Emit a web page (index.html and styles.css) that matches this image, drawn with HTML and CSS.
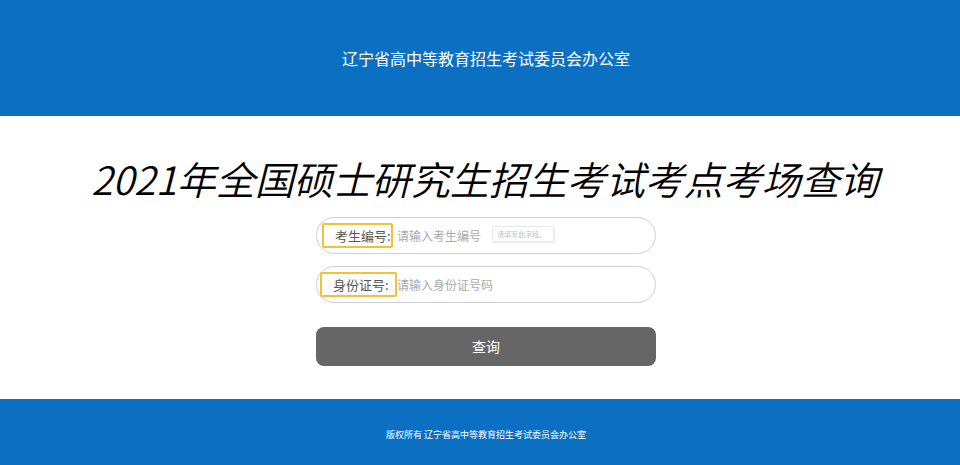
FILE: index.html
```html
<!DOCTYPE html>
<html lang="zh-CN">
<head>
<meta charset="utf-8">
<title>考点考场查询</title>
<link rel="stylesheet" href="styles.css">
</head>
<body>
<header class="top">
  <div class="top-title">辽宁省高中等教育招生考试委员会办公室</div>
</header>
<main class="main">
  <h1 class="title">2021年全国硕士研究生招生考试考点考场查询</h1>
  <form class="form">
    <div class="field">
      <span class="label">考生编号:</span>
      <span class="placeholder">请输入考生编号</span>
      <span class="tip">请填写此字段。</span>
    </div>
    <div class="field">
      <span class="label label-wide">身份证号:</span>
      <span class="placeholder placeholder-tight">请输入身份证号码</span>
    </div>
    <div class="btn">查询</div>
  </form>
</main>
<footer class="bottom">
  <div class="bottom-text">版权所有 辽宁省高中等教育招生考试委员会办公室</div>
</footer>
</body>
</html>
```

FILE: styles.css
```css
* { box-sizing: border-box; }
html, body { margin: 0; padding: 0; }
body {
  width: 960px;
  height: 465px;
  overflow: hidden;
  font-family: "Noto Sans CJK SC", "Noto Sans", sans-serif;
  background: #fff;
}
.top {
  height: 116px;
  background: #0b6fc2;
  display: flex;
  align-items: center;
  justify-content: center;
}
.top-title {
  color: #fff;
  font-size: 16px;
  line-height: 20px;
  padding-left: 12px;
}
.main {
  height: 283px;
  display: flex;
  flex-direction: column;
  align-items: center;
}
.title {
  margin: 38px 0 0 0;
  font-size: 39px;
  line-height: 48px;
  font-weight: 350;
  font-style: italic;
  color: #000;
  white-space: nowrap;
  padding-left: 10px;
}
.form {
  margin-top: 15px;
  width: 340px;
  display: flex;
  flex-direction: column;
  margin-left: 12px;
}
.field {
  position: relative;
  height: 37px;
  border: 1px solid #cfcfcf;
  border-radius: 19px;
  display: flex;
  align-items: center;
  padding-left: 5px;
  margin-bottom: 12px;
}
.label {
  width: 71px;
  height: 25px;
  border: 2px solid #f3c234;
  border-radius: 2px;
  font-size: 13px;
  line-height: 21px;
  color: #555;
  padding-left: 11px;
  white-space: nowrap;
}
.label-wide { width: 77px; margin-left: -2px; }
.placeholder {
  margin-left: 4px;
  font-size: 12px;
  color: #a9a9a9;
  white-space: nowrap;
}
.placeholder-tight { margin-left: 0; }
.tip {
  position: absolute;
  left: 175px;
  top: 8px;
  width: 62px;
  height: 16px;
  border: 1px solid #e6e9ef;
  box-shadow: 1px 1px 2px rgba(0,0,0,0.08);
  font-size: 7px;
  line-height: 14px;
  color: #b8c0cc;
  padding-left: 4px;
  background: #fff;
}
.btn {
  margin-top: 12px;
  height: 39px;
  border-radius: 8px;
  background: #666;
  color: #fff;
  font-size: 14px;
  display: flex;
  align-items: center;
  justify-content: center;
  padding-bottom: 2px;
}
.bottom {
  height: 66px;
  background: #0b6fc2;
  display: flex;
  align-items: center;
  justify-content: center;
}
.bottom-text {
  color: #fff;
  font-size: 9px;
  line-height: 12px;
  white-space: nowrap;
  margin-left: 12px;
  margin-top: 5px;
}
```
